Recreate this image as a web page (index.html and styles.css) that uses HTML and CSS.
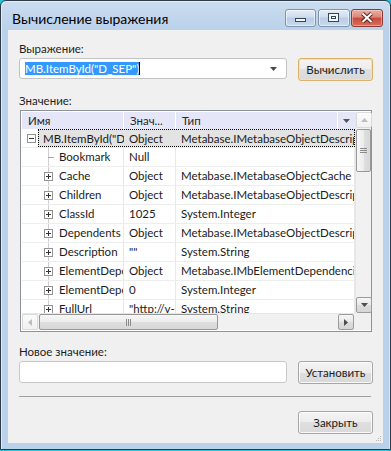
FILE: index.html
```html
<!DOCTYPE html>
<html lang="ru">
<head>
    <meta charset="UTF-8">
    <title>Вычисление выражения</title>
    <link rel="stylesheet" href="styles.css">
</head>
<body>
    <div class="window">
        <div class="titlebar">
            <div class="title">Вычисление выражения</div>
            <div class="caption-buttons">
                <div class="cap-btn min">
                    <svg width="29" height="16" viewBox="0 0 29 16"><rect x="9.5" y="8.5" width="10" height="3" fill="#f4f7fb" stroke="#34465e"/></svg>
                </div>
                <div class="cap-btn max">
                    <svg width="30" height="16" viewBox="0 0 30 16"><rect x="9.5" y="3.5" width="10" height="8" fill="#f4f7fb" stroke="#34465e"/><rect x="12.5" y="6.5" width="4" height="2" fill="none" stroke="#34465e"/></svg>
                </div>
                <div class="cap-btn close">
                    <svg width="30" height="16" viewBox="0 0 30 16"><path d="M10.5 3.5 L19.5 12 M19.5 3.5 L10.5 12" stroke="#5e2118" stroke-width="4"/><path d="M10.5 3.5 L19.5 12 M19.5 3.5 L10.5 12" stroke="#fff" stroke-width="2"/></svg>
                </div>
            </div>
        </div>

        <div class="client">
            <div class="field-label">Выражение:</div>
            <div class="field-row">
                <div class="combo">
                    <span class="selection">MB.ItemById("D_SEP")</span><span class="caret"></span>
                    <span class="combo-arrow">
                        <svg width="7" height="4" viewBox="0 0 7 4"><path d="M0 0 H7 L3.5 4 Z" fill="#4a4a4a"/></svg>
                    </span>
                </div>
                <button class="btn default">Вычислить</button>
            </div>

            <div class="field-label label-gap">Значение:</div>
            <div class="tree">
                <div class="tree-view">
                    <div class="tree-head">
                        <div class="hcell">Имя</div>
                        <div class="hcell">Знач...</div>
                        <div class="hcell">Тип</div>
                        <div class="hcell drop">
                            <svg width="7" height="4" viewBox="0 0 7 4"><path d="M0 0 H7 L3.5 4 Z" fill="#555"/></svg>
                        </div>
                    </div>

                    <div class="row root">
                        <div class="root-exp"><span class="exp minus"></span></div>
                        <div class="focus">
                            <div class="cell"><span class="clip">MB.ItemById("D_SEP")</span></div>
                            <div class="cell">Object</div>
                            <div class="cell"><span class="clip">Metabase.IMetabaseObjectDescriptor</span></div>
                        </div>
                    </div>
                    <div class="row">
                        <div class="cell name"><span class="exp leaf"></span><span class="clip">Bookmark</span></div>
                        <div class="cell">Null</div>
                        <div class="cell"></div>
                    </div>
                    <div class="row">
                        <div class="cell name"><span class="exp plus"></span><span class="clip">Cache</span></div>
                        <div class="cell">Object</div>
                        <div class="cell"><span class="clip">Metabase.IMetabaseObjectCache</span></div>
                    </div>
                    <div class="row">
                        <div class="cell name"><span class="exp plus"></span><span class="clip">Children</span></div>
                        <div class="cell">Object</div>
                        <div class="cell"><span class="clip">Metabase.IMetabaseObjectDescriptors</span></div>
                    </div>
                    <div class="row">
                        <div class="cell name"><span class="exp plus"></span><span class="clip">ClassId</span></div>
                        <div class="cell">1025</div>
                        <div class="cell"><span class="clip">System.Integer</span></div>
                    </div>
                    <div class="row">
                        <div class="cell name"><span class="exp plus"></span><span class="clip">Dependents</span></div>
                        <div class="cell">Object</div>
                        <div class="cell"><span class="clip">Metabase.IMetabaseObjectDescriptors</span></div>
                    </div>
                    <div class="row">
                        <div class="cell name"><span class="exp plus"></span><span class="clip">Description</span></div>
                        <div class="cell">""</div>
                        <div class="cell"><span class="clip">System.String</span></div>
                    </div>
                    <div class="row">
                        <div class="cell name"><span class="exp plus"></span><span class="clip">ElementDependents</span></div>
                        <div class="cell">Object</div>
                        <div class="cell"><span class="clip">Metabase.IMbElementDependencies</span></div>
                    </div>
                    <div class="row">
                        <div class="cell name"><span class="exp plus"></span><span class="clip">ElementDependencies</span></div>
                        <div class="cell">0</div>
                        <div class="cell"><span class="clip">System.Integer</span></div>
                    </div>
                    <div class="row">
                        <div class="cell name"><span class="exp plus"></span><span class="clip">FullUrl</span></div>
                        <div class="cell"><span class="clip">"http://v-ivanov/"</span></div>
                        <div class="cell"><span class="clip">System.String</span></div>
                    </div>
                </div>

                <div class="vscroll">
                    <div class="sb-btn off">
                        <svg width="7" height="4" viewBox="0 0 7 4"><path d="M0 4 H7 L3.5 0 Z" fill="#bdbdbd"/></svg>
                    </div>
                    <div class="thumb v">
                        <svg width="7" height="7" viewBox="0 0 7 7"><path d="M0 1.5 H7 M0 3.5 H7 M0 5.5 H7" stroke="#8a8a8a"/></svg>
                    </div>
                    <div class="sb-space"></div>
                    <div class="sb-btn">
                        <svg width="7" height="4" viewBox="0 0 7 4"><path d="M0 0 H7 L3.5 4 Z" fill="#4d4d4d"/></svg>
                    </div>
                </div>

                <div class="hscroll">
                    <div class="sb-btn off">
                        <svg width="4" height="7" viewBox="0 0 4 7"><path d="M4 0 V7 L0 3.5 Z" fill="#bdbdbd"/></svg>
                    </div>
                    <div class="thumb h">
                        <svg width="7" height="7" viewBox="0 0 7 7"><path d="M1.5 0 V7 M3.5 0 V7 M5.5 0 V7" stroke="#8a8a8a"/></svg>
                    </div>
                    <div class="sb-space"></div>
                    <div class="sb-btn">
                        <svg width="4" height="7" viewBox="0 0 4 7"><path d="M0 0 V7 L4 3.5 Z" fill="#4d4d4d"/></svg>
                    </div>
                </div>
                <div class="corner"></div>
            </div>

            <div class="field-label label-gap">Новое значение:</div>
            <div class="field-row">
                <div class="textbox"></div>
                <button class="btn">Установить</button>
            </div>

            <div class="separator"></div>

            <div class="footer">
                <button class="btn">Закрыть</button>
            </div>

            <svg class="grip" width="7" height="7" viewBox="0 0 7 7">
                <rect x="5" y="1" width="1" height="1" fill="#b5b5b5"/>
                <rect x="3" y="3" width="1" height="1" fill="#b5b5b5"/>
                <rect x="5" y="3" width="1" height="1" fill="#b5b5b5"/>
                <rect x="1" y="5" width="1" height="1" fill="#b5b5b5"/>
                <rect x="3" y="5" width="1" height="1" fill="#b5b5b5"/>
                <rect x="5" y="5" width="1" height="1" fill="#b5b5b5"/>
            </svg>
        </div>
    </div>
</body>
</html>
```

FILE: styles.css
```css
* {
    margin: 0;
    padding: 0;
    box-sizing: border-box;
}

body {
    background: #27c2dc;
    font-family: Lato, "Liberation Sans", sans-serif;
    font-size: 11.5px;
    color: #1b1b1b;
}

.window {
    width: 391px;
    height: 450px;
    border: 1px solid #2e3a46;
    border-radius: 6px 6px 0 0;
    background: linear-gradient(#cbdcef, #b9d1ea 30px);
    box-shadow: inset 1px 1px 0 #e2ecf7, inset -1px 0 0 #dae6f3;
    padding: 0 7px 6px;
    display: flex;
    flex-direction: column;
}

/* title bar */
.titlebar {
    height: 29px;
    display: flex;
    justify-content: space-between;
}

.title {
    font-size: 14px;
    color: #000;
    padding: 9px 0 0 4px;
}

.caption-buttons {
    display: flex;
    padding-top: 8px;
}

.cap-btn {
    height: 18px;
    border: 1px solid #7f93ad;
    border-radius: 3px;
    background: linear-gradient(#e4edf7, #cddcee 45%, #b9cde4 50%, #c8d9ec);
    box-shadow: inset 0 0 0 1px rgba(255, 255, 255, 0.55);
    display: flex;
}

.cap-btn.min {
    width: 31px;
    margin-right: 2px;
}

.cap-btn.max {
    width: 32px;
    margin-right: 1px;
}

.cap-btn.close {
    width: 32px;
    border-color: #8a3a30;
    background: linear-gradient(#eab0a7, #dd8577 45%, #c84a3b 50%, #d8705f);
    box-shadow: inset 0 0 0 1px rgba(255, 220, 210, 0.45);
}

/* client area */
.client {
    flex: 1;
    background: #f0f0f0;
    padding: 11px 10px 0 11px;
    display: flex;
    flex-direction: column;
    position: relative;
}

.field-label {
    line-height: 15px;
    height: 15px;
    color: #1e1e1e;
}

.label-gap {
    margin-top: 12px;
}

.field-row {
    display: flex;
    gap: 11px;
    margin-top: 2px;
    align-items: flex-start;
}

.combo {
    flex: 1;
    height: 21px;
    background: #fff;
    border: 1px solid #c3c3c3;
    border-radius: 3px;
    padding-left: 5px;
    display: flex;
    align-items: center;
}

.selection {
    background: #3399ff;
    color: #fff;
    line-height: 13px;
    height: 13px;
}

.caret {
    width: 1px;
    height: 13px;
    background: #000;
}

.combo-arrow {
    margin-left: auto;
    width: 18px;
    display: flex;
    align-items: center;
    padding-left: 2px;
}

.textbox {
    flex: 1;
    height: 22px;
    background: #fff;
    border: 1px solid #c8c8c8;
    border-radius: 3px;
}

.btn {
    width: 75px;
    height: 23px;
    font: inherit;
    color: #1b1b1b;
    border: 1px solid #a6a6a6;
    border-radius: 3px;
    background: linear-gradient(#f4f4f4, #ececec 50%, #dfdfdf 50%, #d9d9d9);
    box-shadow: inset 0 0 0 1px rgba(255, 255, 255, 0.8);
}

.btn.default {
    border-color: #dcb06a;
    box-shadow: inset 0 0 0 1px #f8e1b0;
}

/* tree grid */
.tree {
    margin-top: 2px;
    margin-left: 1px;
    width: 352px;
    height: 222px;
    border: 1px solid #8e939b;
    background: #fff;
    padding: 1px 0 1px 1px;
    display: grid;
    grid-template-columns: 333px 16px;
    grid-template-rows: 201px 17px;
}

.tree-view {
    overflow: hidden;
}

.tree-head {
    display: grid;
    grid-template-columns: 102px 52px 162px 17px;
    height: 17px;
    background: #e5e6f8;
}

.hcell {
    line-height: 17px;
    padding-left: 6px;
    border-right: 1px solid #fff;
    color: #262626;
    white-space: nowrap;
    overflow: hidden;
}

.hcell.drop {
    border-right: none;
    padding-left: 5px;
    display: flex;
    align-items: center;
}

.row {
    display: grid;
    grid-template-columns: 102px 52px 179px;
    height: 19px;
    border-bottom: 1px solid #ededed;
}

.cell {
    line-height: 18px;
    padding-left: 5px;
    border-right: 1px solid #e8e8e8;
    white-space: nowrap;
    overflow: hidden;
    display: flex;
    min-width: 0;
}

.clip {
    display: block;
    overflow: hidden;
    min-width: 0;
    flex: 1;
}

.cell.name {
    align-items: center;
    gap: 6px;
    padding-left: 22px;
    background: linear-gradient(#cfcfcf, #cfcfcf) no-repeat 26px 0 / 1px 100%;
}

.row.root {
    display: flex;
}

.root-exp {
    width: 16px;
    padding-left: 5px;
    display: flex;
    align-items: center;
}

.focus {
    flex: 1;
    display: grid;
    grid-template-columns: 85px 52px 1fr;
    background: #e3e3e3;
    border: 1px dotted #000;
    min-width: 0;
}

.focus .cell {
    border-right: none;
    line-height: 17px;
}

.focus .cell:first-child {
    padding-left: 4px;
}

.exp {
    width: 9px;
    height: 9px;
    flex-shrink: 0;
    position: relative;
}

.exp.plus,
.exp.minus {
    border: 1px solid #929292;
    background: #fff;
}

.exp.plus::before,
.exp.minus::before {
    content: "";
    position: absolute;
    left: 1px;
    top: 3px;
    width: 5px;
    height: 1px;
    background: #333;
}

.exp.plus::after {
    content: "";
    position: absolute;
    left: 3px;
    top: 1px;
    width: 1px;
    height: 5px;
    background: #333;
}

.exp.leaf::before {
    content: "";
    position: absolute;
    left: 4px;
    top: 4px;
    width: 6px;
    height: 1px;
    background: #a8a8a8;
}

/* scrollbars */
.vscroll,
.hscroll {
    display: flex;
    background: #f1f1f1;
}

.vscroll {
    flex-direction: column;
    border-left: 1px solid #e6e6e6;
}

.hscroll {
    border-top: 1px solid #e6e6e6;
}

.sb-btn {
    width: 16px;
    height: 16px;
    border: 1px solid #9b9b9b;
    border-radius: 2px;
    background: linear-gradient(#f6f6f6, #e8e8e8 50%, #dcdcdc 50%, #d6d6d6);
    display: flex;
    align-items: center;
    justify-content: center;
}

.hscroll .sb-btn {
    margin-right: 1px;
}

.sb-btn.off {
    border-color: #dadada;
    background: linear-gradient(#fbfbfb, #f1f1f1);
}

.sb-space {
    flex: 1;
}

.thumb {
    border: 1px solid #989898;
    border-radius: 2px;
    display: flex;
    align-items: center;
    justify-content: center;
}

.thumb.v {
    margin-top: 1px;
    height: 43px;
    background: linear-gradient(to right, #f7f7f7, #ececec 50%, #dedede 50%, #d8d8d8);
}

.thumb.h {
    width: 179px;
    background: linear-gradient(#f7f7f7, #ececec 50%, #dedede 50%, #d8d8d8);
}

.corner {
    background: #f0f0f0;
}

.separator {
    margin-top: 12px;
    margin-right: 2px;
    height: 1px;
    background: #a0a0a0;
}

.footer {
    margin-top: 14px;
    display: flex;
    justify-content: flex-end;
}

.grip {
    position: absolute;
    right: 1px;
    bottom: 1px;
}
```
